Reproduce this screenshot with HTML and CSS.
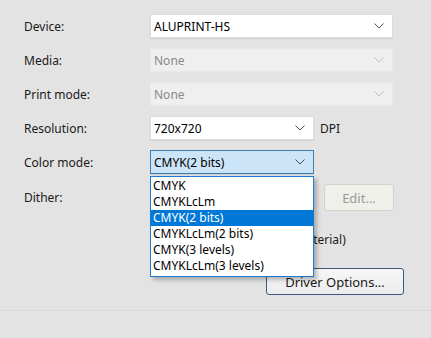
FILE: index.html
```html
<!DOCTYPE html>
<html>
<head>
	<meta charset="utf-8">
	<title>Printer Settings</title>
	<link rel="stylesheet" href="styles.css">
</head>
<body>
	<div class="panel">
		<div class="row">
			<label>Device:</label>
			<div class="combo">
				<span>ALUPRINT-HS</span>
				<svg class="arrow" width="10" height="6" viewBox="0 0 10 6"><path d="M0.5 0.5 L5 5 L9.5 0.5" fill="none" stroke="currentColor"/></svg>
			</div>
		</div>
		<div class="row">
			<label>Media:</label>
			<div class="combo disabled">
				<span>None</span>
				<svg class="arrow" width="10" height="6" viewBox="0 0 10 6"><path d="M0.5 0.5 L5 5 L9.5 0.5" fill="none" stroke="currentColor"/></svg>
			</div>
		</div>
		<div class="row">
			<label>Print mode:</label>
			<div class="combo disabled">
				<span>None</span>
				<svg class="arrow" width="10" height="6" viewBox="0 0 10 6"><path d="M0.5 0.5 L5 5 L9.5 0.5" fill="none" stroke="currentColor"/></svg>
			</div>
		</div>
		<div class="row">
			<label>Resolution:</label>
			<div class="combo short">
				<span>720x720</span>
				<svg class="arrow" width="10" height="6" viewBox="0 0 10 6"><path d="M0.5 0.5 L5 5 L9.5 0.5" fill="none" stroke="currentColor"/></svg>
			</div>
			<span class="unit">DPI</span>
		</div>
		<div class="row">
			<label>Color mode:</label>
			<div class="combo short open">
				<span>CMYK(2 bits)</span>
				<svg class="arrow" width="10" height="6" viewBox="0 0 10 6"><path d="M0.5 0.5 L5 5 L9.5 0.5" fill="none" stroke="currentColor"/></svg>
				<ul class="dropdown">
					<li>CMYK</li>
					<li>CMYKLcLm</li>
					<li class="selected">CMYK(2 bits)</li>
					<li>CMYKLcLm(2 bits)</li>
					<li>CMYK(3 levels)</li>
					<li>CMYKLcLm(3 levels)</li>
				</ul>
			</div>
		</div>
		<div class="row dither">
			<label>Dither:</label>
			<div class="combo short disabled"><span>Default</span></div>
			<button class="btn" disabled>Edit...</button>
		</div>
		<div class="row check">
			<span class="checkline">Use ink limits (for material)</span>
		</div>
		<div class="row buttons">
			<button class="btn primary">Driver Options...</button>
		</div>
	</div>
	<div class="footer"></div>
</body>
</html>
```

FILE: styles.css
```css
body {
	margin: 0;
	background: #e3e3e3;
	font-family: "Noto Sans", sans-serif;
	font-size: 12px;
	color: #1a1a1a;
	width: 431px;
	height: 338px;
	overflow: hidden;
}
.panel {
	padding: 14px 0 0 24px;
	height: 296px;
	border-bottom: 1px solid #d8d8d8;
}
.row {
	display: flex;
	align-items: center;
	height: 24px;
	margin-bottom: 10px;
}
.row label {
	width: 126px;
	flex: none;
}
.combo {
	position: relative;
	flex: none;
	box-sizing: border-box;
	width: 243px;
	height: 24px;
	background: #fff;
	border: 1px solid #dcdcdc;
	box-shadow: 0 1px 1px rgba(0, 0, 0, 0.08);
	display: flex;
	align-items: center;
	padding: 0 8px 0 3px;
	color: #000;
}
.combo span {
	flex: 1;
}
.combo .arrow {
	color: #4a4a4a;
}
.combo.disabled {
	background: #efefef;
	border-color: #e8e8e8;
	box-shadow: none;
	color: #8a8a8a;
}
.combo.disabled .arrow {
	color: #c0c0c0;
}
.combo.short {
	width: 164px;
}
.combo.open {
	background: #cce4f7;
	border-color: #3c7fb1;
}
.unit {
	margin-left: 6px;
}
.dropdown {
	position: absolute;
	left: -1px;
	top: 25px;
	width: 164px;
	box-sizing: border-box;
	margin: 0;
	padding: 1px 0 2px;
	list-style: none;
	background: #fff;
	border: 1px solid #1e7ad0;
	box-shadow: 3px 3px 4px rgba(0, 0, 0, 0.25);
	z-index: 2;
}
.dropdown li {
	height: 16px;
	line-height: 16px;
	padding-left: 2px;
	color: #000;
}
.dropdown li.selected {
	background: #0078d7;
	color: #fff;
}
.dither {
	height: 27px;
	margin-bottom: 16px;
}
.dither .combo {
	visibility: hidden;
}
.btn {
	flex: none;
	font-family: inherit;
	font-size: 13px;
	box-sizing: border-box;
	height: 27px;
	border-radius: 3px;
	padding: 0;
	text-align: center;
}
.dither .btn {
	margin-left: 10px;
	width: 70px;
	background: #f0f0ea;
	border: 1px solid #d4d4cc;
	color: #9a9a9a;
}
.check {
	padding-left: 170px;
	margin-bottom: 17px;
	height: 24px;
}
.buttons {
	padding-left: 242px;
	height: 27px;
}
.btn.primary {
	width: 138px;
	background: linear-gradient(#f7f7f7, #ececec);
	border: 1px solid #3b5a7d;
	color: #1a1a1a;
}
.footer {
	height: 40px;
}
```
